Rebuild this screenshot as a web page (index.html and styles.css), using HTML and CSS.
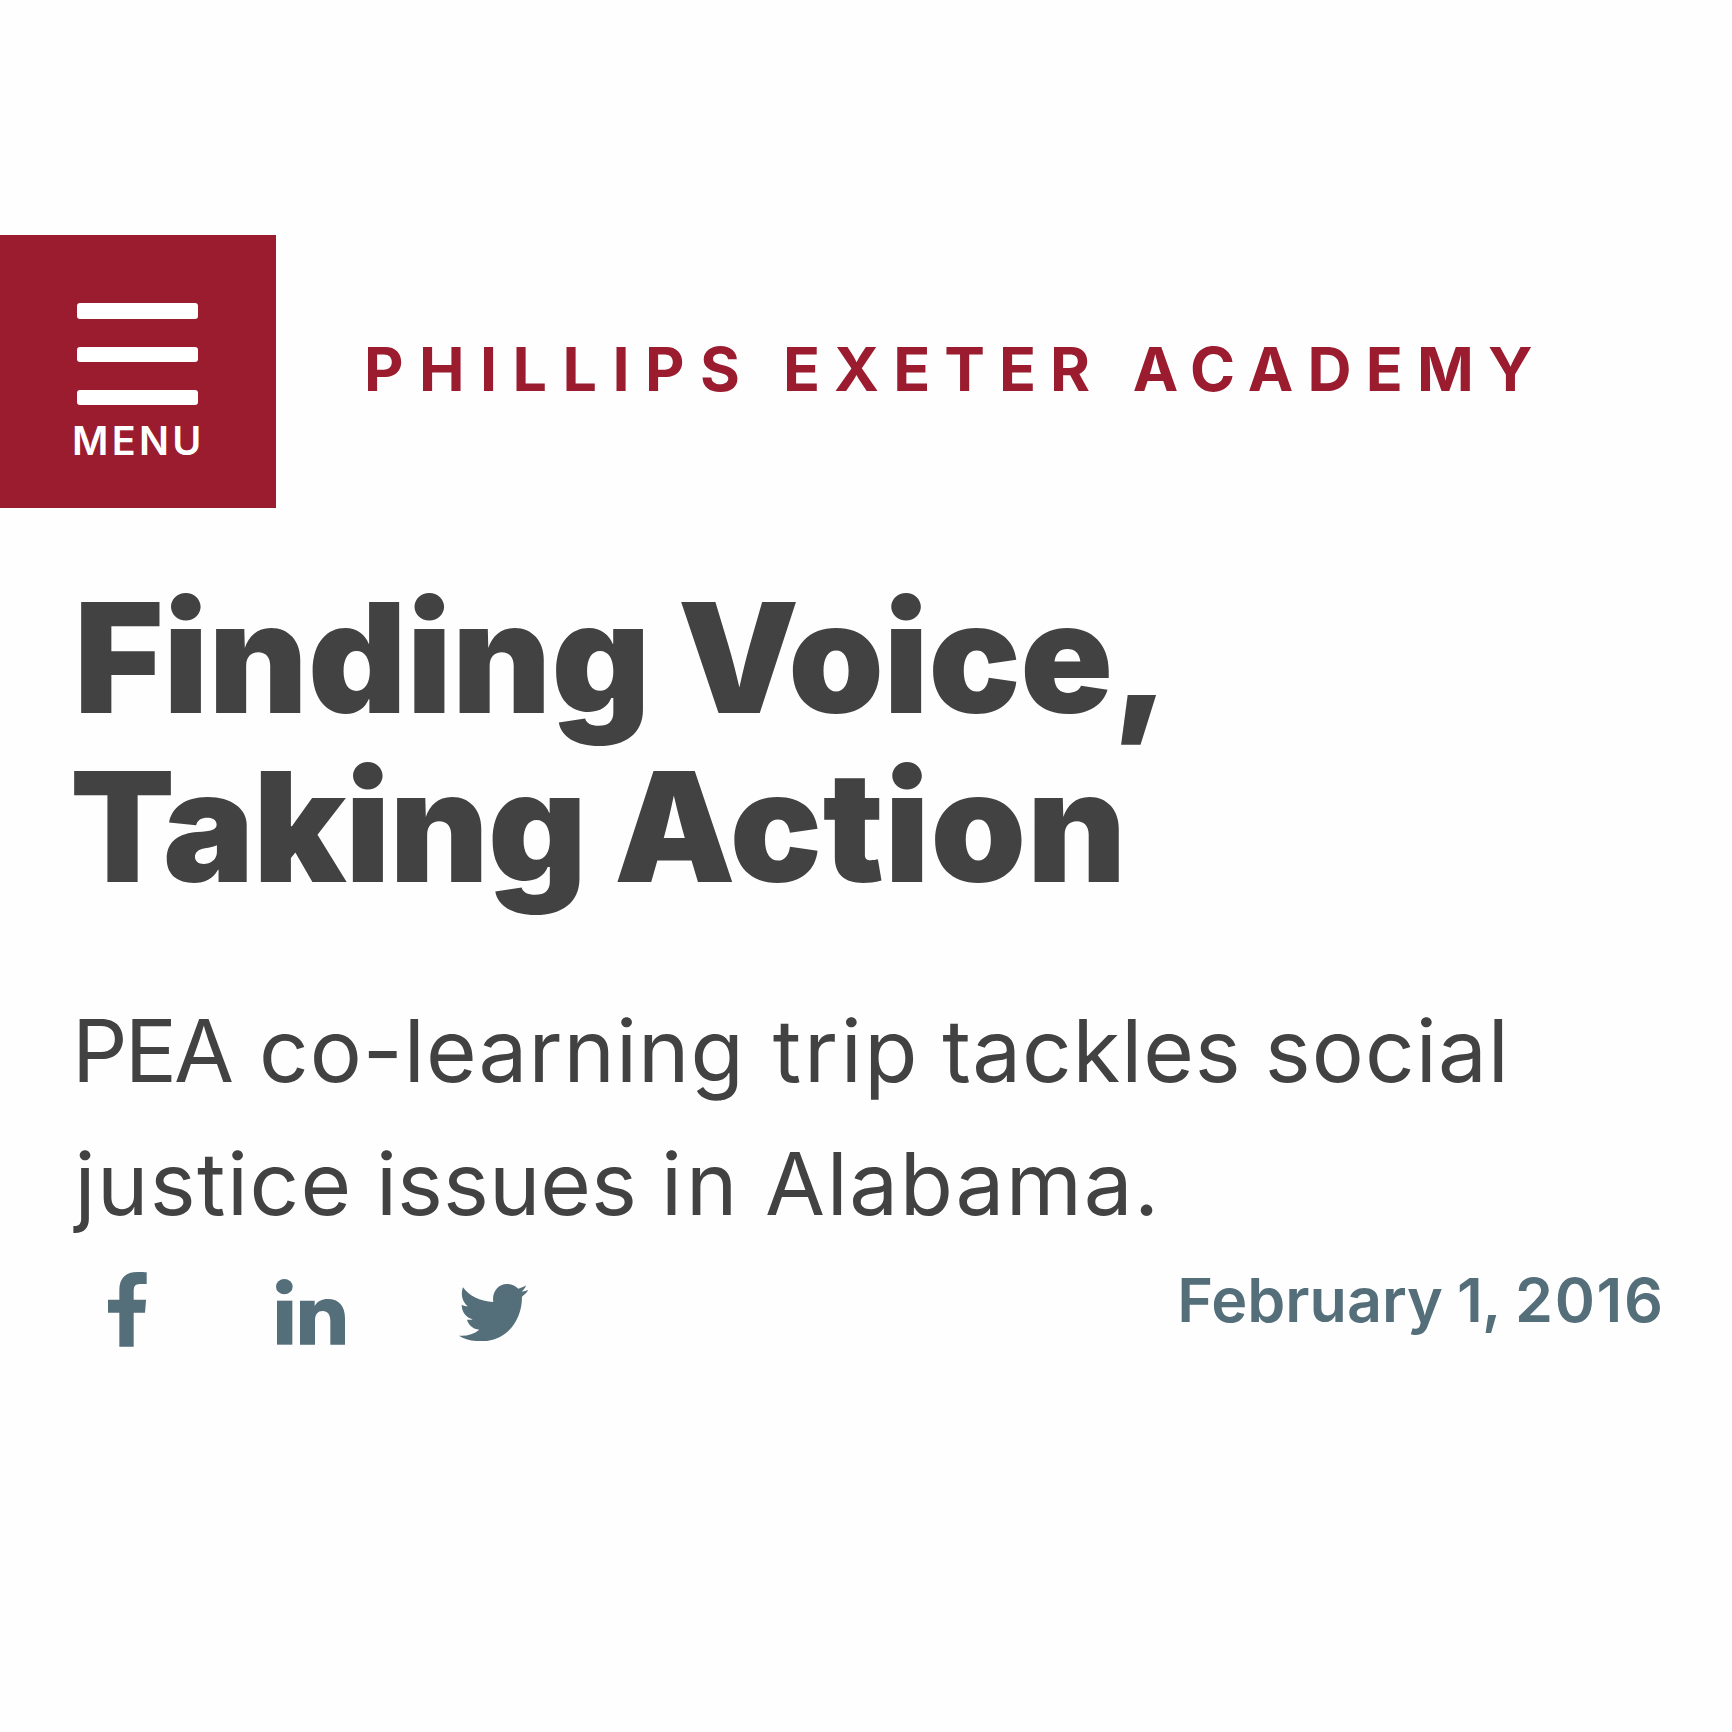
FILE: index.html
```
<!DOCTYPE html>
<html lang="en">
<head>
<meta charset="utf-8">
<title>Finding Voice, Taking Action | Phillips Exeter Academy</title>
<link rel="stylesheet" href="styles.css">
</head>
<body>
<header class="site-header">
  <button class="menu-button" type="button">
    <span class="bars"><i class="bar"></i><i class="bar"></i><i class="bar"></i></span>
    <span class="menu-label">MENU</span>
  </button>
  <a class="brand"><span class="b1">PHILLIPS</span> <span class="b2">EXETER</span> <span class="b3">ACADEMY</span></a>
</header>
<main class="article">
  <h1 class="title">
    <span class="line line-1"><span class="t1">Finding</span> <span class="t2">Voice,</span></span>
    <span class="line line-2"><span class="t3">Taking</span> <span class="t4">Action</span></span>
  </h1>
  <p class="summary">
    <span class="line"><span class="s1">PEA</span> <span class="s2">co-learning</span> <span class="s3">trip</span> <span class="s4">tackles</span> <span class="s5">social</span></span>
    <span class="line summary-2"><span class="s6">justice</span> <span class="s7">issues</span> <span class="s8">in</span> <span class="s9">Alabama.</span></span>
  </p>
  <div class="meta">
    <nav class="share">
      <a class="facebook" aria-label="Facebook"><svg width="38.7" height="74.7" viewBox="24 21 116 224"><path d="M140 22V57H118Q101 57 101 76V104H138L135 143H101V245H58V143H24V104H58V75C58 38 78 21 112 21C124 21 134 21 140 22Z"/></svg></a>
      <a class="linkedin" aria-label="LinkedIn"><svg width="69" height="65.7" viewBox="17 27 207 197"><ellipse cx="42" cy="50" rx="25" ry="23"/><rect x="20" y="92" width="46" height="132"/><path d="M89 92H133V108C142 93 155 87 172 87C207 87 224 109 224 145V224H180V153C180 133 172 123 157 123C142 123 134 133 134 152V224H89Z"/></svg></a>
      <a class="twitter" aria-label="Twitter"><svg width="69.3" height="57.3" viewBox="28 26 208 172"><path d="M40 36C58 62 90 78 131 80C126 52 144 26 172 26C186 26 198 32 206 40C214 38 222 35 229 30C227 38 222 44 216 49C223 48 230 46 236 44C232 51 225 58 217 64C218 130 175 198 97 198C70 198 45 192 28 181C50 183 72 177 89 163C70 161 57 150 52 133C58 134 64 134 69 132C50 127 36 111 36 88C42 91 48 93 55 93C38 80 32 56 40 36Z"/></svg></a>
    </nav>
    <time class="date" datetime="2016-02-01"><span class="d1">February</span> <span class="d2">1,</span> <span class="d3">2016</span></time>
  </div>
</main>
</body>
</html>
```
FILE: styles.css
```
* { box-sizing: border-box; }

body {
  margin: 0;
  min-height: 1732px;
  padding-top: 235.4px;
  background: #fefefe;
  color: #424242;
  font-family: Inter, "Liberation Sans", sans-serif;
}

.site-header { display: flex; align-items: center; height: 273px; }

.menu-button {
  display: flex;
  flex-direction: column;
  align-items: center;
  width: 275.6px;
  height: 273px;
  padding: 68.1px 0 0;
  border: 0;
  background: #9a1c2e;
  color: #fff;
  font-family: inherit;
}
.bars { display: flex; flex-direction: column; gap: 28px; width: 121px; }
.bar { height: 15.2px; border-radius: 3px; background: #fff; }
.menu-label {
  margin-top: 16px;
  padding-left: 1px;
  font-size: 39.5px;
  font-weight: 600;
  line-height: 40px;
  letter-spacing: 3.3px;
}

.brand {
  padding: 0 0 6px 88.4px;
  color: #9a1c2e;
  font-size: 61px;
  font-weight: 700;
  line-height: 64px;
  white-space: nowrap;
}
.b1 { letter-spacing: 15.45px; }
.b2 { margin-left: 13.2px; letter-spacing: 14.02px; }
.b3 { margin-left: 14.2px; letter-spacing: 14.23px; }

.article { padding: 64.6px 70px 0; }
.line { display: block; white-space: nowrap; }

.title { margin: 0; font-size: 153px; font-weight: 900; line-height: 169px; }
.line-1 { padding-left: 4px; }
.t2 { margin-left: -3.2px; letter-spacing: -0.39px; }
.t3 { letter-spacing: -0.91px; }
.t4 { margin-left: -2.7px; letter-spacing: 0.72px; }

.summary { margin: 73px 0 0 2px; font-size: 87px; line-height: 133.5px; }
.summary-2 { padding-left: 2.5px; }
.s1 { letter-spacing: -2.93px; }
.s2 { margin-left: 3.4px; letter-spacing: 1.01px; }
.s3 { margin-left: 3.6px; letter-spacing: 2.62px; }
.s4 { margin-left: -2.4px; letter-spacing: 0.92px; }
.s5 { margin-left: -1.3px; letter-spacing: 1.06px; }
.s6 { letter-spacing: 1.39px; }
.s7 { margin-left: -1.1px; }
.s8 { margin-left: -0.4px; letter-spacing: 3.93px; }
.s9 { margin-left: -0.8px; letter-spacing: 1.57px; }

.meta {
  display: flex;
  justify-content: space-between;
  align-items: flex-start;
  margin: 17.2px -2.7px 0 38px;
  color: #546e7a;
}
.share { display: flex; align-items: flex-start; padding-top: 4px; }
.share svg { display: block; fill: currentColor; }
.linkedin { margin: 7px 0 0 129px; }
.twitter { margin: 11.7px 0 0 114.6px; }

.date { font-size: 61px; font-weight: 600; line-height: 64px; white-space: nowrap; }
.d2 { margin-left: -1.3px; letter-spacing: -0.79px; }
.d3 { margin-left: -1.1px; letter-spacing: 1.65px; }
```
